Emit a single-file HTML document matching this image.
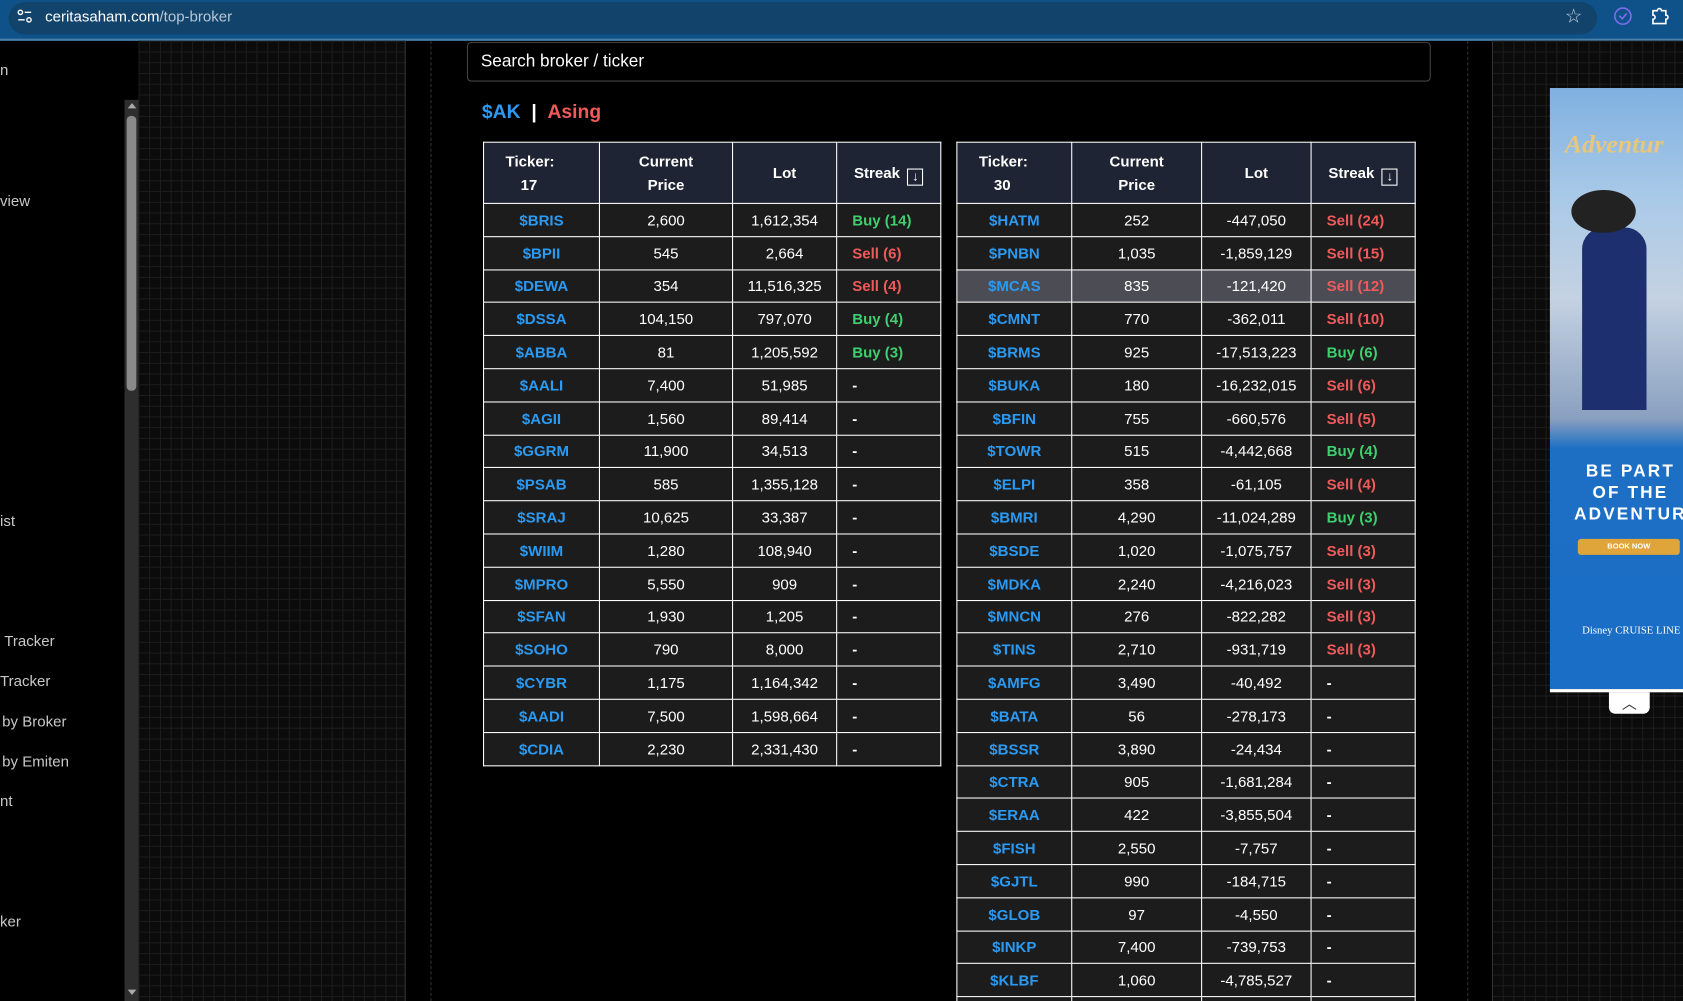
<!DOCTYPE html>
<html><head><meta charset="utf-8">
<style>
html,body{margin:0;padding:0;width:1683px;height:1001px;overflow:hidden;background:#000;font-family:"Liberation Sans",sans-serif;}
#w{position:absolute;left:0;top:0;width:1568px;height:933px;transform:scale(1.07334);transform-origin:0 0;overflow:hidden;background:#000;}
.grid{position:absolute;background-color:#0b0b0b;background-image:linear-gradient(#1d1d1d 1px,transparent 1px),linear-gradient(90deg,#1d1d1d 1px,transparent 1px);background-size:10px 10px;}
#bar{position:absolute;left:0;top:0;width:1568px;height:36px;background:#0f5289;border-bottom:2px solid #4b7fa8;}
#pill{position:absolute;left:8px;top:2px;width:1480px;height:30px;border-radius:16px;background:#12436b;}
#url{position:absolute;left:42px;top:7px;font-size:14px;color:#fff;}
#url span{color:#b8c7d6}
.side{position:absolute;color:#c8c8c8;font-size:14px;}
table{position:absolute;border-collapse:collapse;font-size:14px;color:#fff;table-layout:fixed;}
td,th{border:1px solid #fff;height:30.8px;padding:0;text-align:center;box-sizing:border-box;}
th{background:#1e2433;font-weight:bold;line-height:22px;height:57px;}
th.tk{text-align:left;padding-left:20px;}
th.tk span{padding-left:14px}
td{background:#1c1c1c;}
td.t{color:#2b9af3;font-weight:bold;}
td.s{text-align:left;padding-left:14px;font-weight:bold;}
.b{color:#3ecf6e}.r{color:#f05a5a}
tr.h td{background:#4c4c55;}
.arr{display:inline-block;width:13px;height:14px;border:1.5px solid #fff;vertical-align:-2px;font-size:12px;line-height:13px;font-weight:normal;margin-left:3px;text-align:center;}
</style></head><body><div id="w">
<div id="bar"><div id="pill"></div>
<svg style="position:absolute;left:16px;top:8px" width="14" height="14" viewBox="0 0 14 14"><circle cx="3" cy="3.5" r="2" fill="none" stroke="#fff" stroke-width="1.3"/><line x1="7" y1="3.5" x2="13" y2="3.5" stroke="#fff" stroke-width="1.3"/><line x1="1" y1="10.5" x2="7" y2="10.5" stroke="#fff" stroke-width="1.3"/><circle cx="11" cy="10.5" r="2" fill="none" stroke="#fff" stroke-width="1.3"/></svg>
<div id="url">ceritasaham.com<span>/top-broker</span></div>
<div style="position:absolute;left:1458px;top:5px;color:#c8d4df;font-size:18px">☆</div>
<svg style="position:absolute;left:1503px;top:6px" width="18" height="18" viewBox="0 0 18 18"><circle cx="9" cy="9" r="7.5" fill="none" stroke="#7b6cf0" stroke-width="1.5"/><path d="M5.5 8.5l3 3 4-5" fill="none" stroke="#7b6cf0" stroke-width="1.5"/></svg>
<svg style="position:absolute;left:1538px;top:6px" width="18" height="18" viewBox="0 0 18 18"><path d="M2 4h4a2 2 0 0 1 4 0h4v4a2 2 0 0 1 0 4v4H2v-4a2 2 0 0 0 0-4z" fill="none" stroke="#fff" stroke-width="1.5"/></svg>
</div>

<div class="side" style="left:0;top:57px">n</div>
<div class="side" style="left:0;top:179px">view</div>
<div class="side" style="left:0;top:477px">ist</div>
<div class="side" style="left:4px;top:589px">Tracker</div>
<div class="side" style="left:0;top:626px">Tracker</div>
<div class="side" style="left:2px;top:664px">by Broker</div>
<div class="side" style="left:2px;top:701px">by Emiten</div>
<div class="side" style="left:0;top:738px">nt</div>
<div class="side" style="left:0;top:850px">ker</div>
<div style="position:absolute;left:116px;top:93px;width:13px;height:840px;background:#2e2e2e"></div>
<div style="position:absolute;left:118px;top:108px;width:9px;height:256px;background:#8a8a8a;border-radius:4px"></div>
<div style="position:absolute;left:119px;top:96px;width:0;height:0;border-left:4px solid transparent;border-right:4px solid transparent;border-bottom:5px solid #aaa"></div>
<div style="position:absolute;left:119px;top:922px;width:0;height:0;border-left:4px solid transparent;border-right:4px solid transparent;border-top:5px solid #aaa"></div>

<div class="grid" style="left:129px;top:38px;width:249px;height:895px"></div>
<div style="position:absolute;left:377px;top:38px;width:1px;height:895px;background:#333"></div>
<div style="position:absolute;left:401px;top:38px;width:0;height:895px;border-left:1px dashed #333"></div>
<div style="position:absolute;left:1367px;top:38px;width:0;height:895px;border-left:1px dashed #333"></div>
<div class="grid" style="left:1390px;top:38px;width:178px;height:895px"></div>
<div style="position:absolute;left:1390px;top:38px;width:1px;height:895px;background:#333"></div>

<div style="position:absolute;left:435px;top:39px;width:896px;height:35px;border:1px solid #444;border-radius:4px;background:#000"></div>
<div style="position:absolute;left:448px;top:49px;color:#fff;font-size:16px">Search broker / ticker</div>
<div style="position:absolute;left:449px;top:94px;font-size:18px;font-weight:bold"><span style="color:#2b9af3">$AK</span><span style="color:#fff"> &nbsp;| &nbsp;</span><span style="color:#f05a5a">Asing</span></div>

<table style="left:450px;top:132px;width:427px">
<colgroup><col style="width:108px"><col style="width:124px"><col style="width:97px"><col style="width:97px"></colgroup>
<tr><th class="tk">Ticker:<br><span>17</span></th><th>Current<br>Price</th><th>Lot</th><th>Streak <span class="arr">↓</span></th></tr>
<tr><td class="t">$BRIS</td><td>2,600</td><td>1,612,354</td><td class="s b">Buy (14)</td></tr>
<tr><td class="t">$BPII</td><td>545</td><td>2,664</td><td class="s r">Sell (6)</td></tr>
<tr><td class="t">$DEWA</td><td>354</td><td>11,516,325</td><td class="s r">Sell (4)</td></tr>
<tr><td class="t">$DSSA</td><td>104,150</td><td>797,070</td><td class="s b">Buy (4)</td></tr>
<tr><td class="t">$ABBA</td><td>81</td><td>1,205,592</td><td class="s b">Buy (3)</td></tr>
<tr><td class="t">$AALI</td><td>7,400</td><td>51,985</td><td class="s">-</td></tr>
<tr><td class="t">$AGII</td><td>1,560</td><td>89,414</td><td class="s">-</td></tr>
<tr><td class="t">$GGRM</td><td>11,900</td><td>34,513</td><td class="s">-</td></tr>
<tr><td class="t">$PSAB</td><td>585</td><td>1,355,128</td><td class="s">-</td></tr>
<tr><td class="t">$SRAJ</td><td>10,625</td><td>33,387</td><td class="s">-</td></tr>
<tr><td class="t">$WIIM</td><td>1,280</td><td>108,940</td><td class="s">-</td></tr>
<tr><td class="t">$MPRO</td><td>5,550</td><td>909</td><td class="s">-</td></tr>
<tr><td class="t">$SFAN</td><td>1,930</td><td>1,205</td><td class="s">-</td></tr>
<tr><td class="t">$SOHO</td><td>790</td><td>8,000</td><td class="s">-</td></tr>
<tr><td class="t">$CYBR</td><td>1,175</td><td>1,164,342</td><td class="s">-</td></tr>
<tr><td class="t">$AADI</td><td>7,500</td><td>1,598,664</td><td class="s">-</td></tr>
<tr><td class="t">$CDIA</td><td>2,230</td><td>2,331,430</td><td class="s">-</td></tr>
</table>

<table style="left:891px;top:132px;width:428px">
<colgroup><col style="width:107px"><col style="width:121px"><col style="width:102px"><col style="width:97px"></colgroup>
<tr><th class="tk">Ticker:<br><span>30</span></th><th>Current<br>Price</th><th>Lot</th><th>Streak <span class="arr">↓</span></th></tr>
<tr><td class="t">$HATM</td><td>252</td><td>-447,050</td><td class="s r">Sell (24)</td></tr>
<tr><td class="t">$PNBN</td><td>1,035</td><td>-1,859,129</td><td class="s r">Sell (15)</td></tr>
<tr class="h"><td class="t">$MCAS</td><td>835</td><td>-121,420</td><td class="s r">Sell (12)</td></tr>
<tr><td class="t">$CMNT</td><td>770</td><td>-362,011</td><td class="s r">Sell (10)</td></tr>
<tr><td class="t">$BRMS</td><td>925</td><td>-17,513,223</td><td class="s b">Buy (6)</td></tr>
<tr><td class="t">$BUKA</td><td>180</td><td>-16,232,015</td><td class="s r">Sell (6)</td></tr>
<tr><td class="t">$BFIN</td><td>755</td><td>-660,576</td><td class="s r">Sell (5)</td></tr>
<tr><td class="t">$TOWR</td><td>515</td><td>-4,442,668</td><td class="s b">Buy (4)</td></tr>
<tr><td class="t">$ELPI</td><td>358</td><td>-61,105</td><td class="s r">Sell (4)</td></tr>
<tr><td class="t">$BMRI</td><td>4,290</td><td>-11,024,289</td><td class="s b">Buy (3)</td></tr>
<tr><td class="t">$BSDE</td><td>1,020</td><td>-1,075,757</td><td class="s r">Sell (3)</td></tr>
<tr><td class="t">$MDKA</td><td>2,240</td><td>-4,216,023</td><td class="s r">Sell (3)</td></tr>
<tr><td class="t">$MNCN</td><td>276</td><td>-822,282</td><td class="s r">Sell (3)</td></tr>
<tr><td class="t">$TINS</td><td>2,710</td><td>-931,719</td><td class="s r">Sell (3)</td></tr>
<tr><td class="t">$AMFG</td><td>3,490</td><td>-40,492</td><td class="s">-</td></tr>
<tr><td class="t">$BATA</td><td>56</td><td>-278,173</td><td class="s">-</td></tr>
<tr><td class="t">$BSSR</td><td>3,890</td><td>-24,434</td><td class="s">-</td></tr>
<tr><td class="t">$CTRA</td><td>905</td><td>-1,681,284</td><td class="s">-</td></tr>
<tr><td class="t">$ERAA</td><td>422</td><td>-3,855,504</td><td class="s">-</td></tr>
<tr><td class="t">$FISH</td><td>2,550</td><td>-7,757</td><td class="s">-</td></tr>
<tr><td class="t">$GJTL</td><td>990</td><td>-184,715</td><td class="s">-</td></tr>
<tr><td class="t">$GLOB</td><td>97</td><td>-4,550</td><td class="s">-</td></tr>
<tr><td class="t">$INKP</td><td>7,400</td><td>-739,753</td><td class="s">-</td></tr>
<tr><td class="t">$KLBF</td><td>1,060</td><td>-4,785,527</td><td class="s">-</td></tr>
<tr><td class="t">$LPKR</td><td>1,000</td><td>-1,000</td><td class="s">-</td></tr>
</table>

<div style="position:absolute;left:1444px;top:82px;width:124px;height:560px;background:linear-gradient(180deg,#7fb0e0 0%,#a9c9e8 18%,#c4d2e2 35%,#8aa0c0 55%,#1d6fc4 60%,#1a6ec6 100%);border-bottom:3px solid #fff;overflow:hidden">
<div style="position:absolute;left:14px;top:40px;color:#e8c77a;font-family:'Liberation Serif',serif;font-size:24px;font-weight:bold;font-style:italic">Adventur</div>
<div style="position:absolute;left:30px;top:130px;width:60px;height:170px;background:#1d2f6e;border-radius:20px 20px 0 0"></div>
<div style="position:absolute;left:20px;top:95px;width:60px;height:40px;background:#222;border-radius:50%"></div>
<div style="position:absolute;left:0;top:348px;width:150px;text-align:center;color:#fff;font-weight:bold;font-size:16px;letter-spacing:2px;line-height:20px">BE PART<br>OF THE<br>ADVENTUR</div>
<div style="position:absolute;left:26px;top:420px;width:95px;height:15px;background:#e0a53a;border-radius:3px;color:#fff;font-size:7px;font-weight:bold;text-align:center;line-height:15px">BOOK NOW</div>
<div style="position:absolute;left:30px;top:500px;color:#fff;font-size:10px;font-family:'Liberation Serif',serif">Disney CRUISE LINE</div>
</div>
<div style="position:absolute;left:1499px;top:645px;width:38px;height:20px;background:#fff;border-radius:0 0 6px 6px;text-align:center;color:#333;font-size:14px;line-height:20px">︿</div>
</div></body></html>
